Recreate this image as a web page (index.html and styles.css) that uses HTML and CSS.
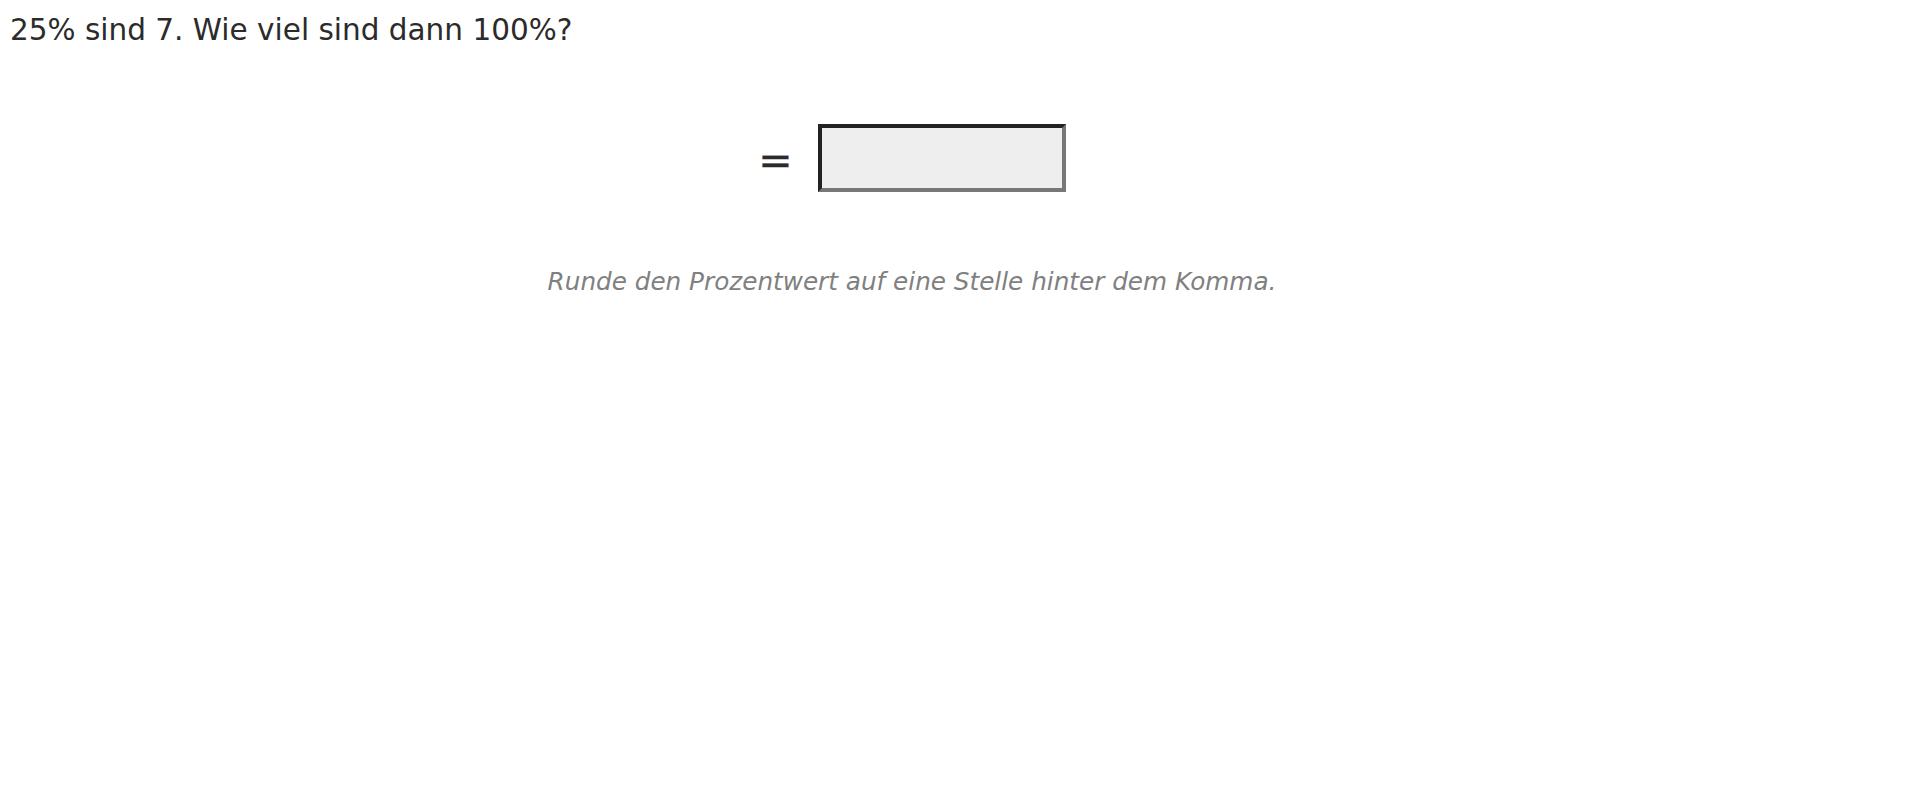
FILE: index.html
```html
<!DOCTYPE html>
<html lang="de">
<head>
<meta charset="utf-8">
<title>Prozentrechnung</title>
<link rel="stylesheet" href="styles.css">
</head>
<body>
<div class="page">
  <h1 class="question">25% sind 7. Wie viel sind dann 100%?</h1>
  <div class="exercise">
    <div class="answer-row">
      <span class="equals">=</span>
      <input class="answer" type="text" aria-label="Antwort">
    </div>
    <p class="hint">Runde den Prozentwert auf eine Stelle hinter dem Komma.</p>
  </div>
</div>
</body>
</html>
```
FILE: styles.css
```css
html, body {
  margin: 0;
  padding: 0;
  background: #ffffff;
}

body {
  font-family: "DejaVu Sans", Verdana, sans-serif;
  color: #2b2b2b;
}

.page {
  padding: 13px 0 0 10px;
}

.question {
  margin: 0;
  font-size: 29.5px;
  font-weight: normal;
  line-height: 34px;
}

.exercise {
  width: 1804px;
  display: flex;
  flex-direction: column;
  align-items: center;
}

.answer-row {
  margin-top: 77px;
  display: flex;
  align-items: center;
  gap: 25px;
}

.equals {
  font-size: 41px;
  line-height: 1;
  padding-top: 4px;
  -webkit-text-stroke: 0.4px #2b2b2b;
}

.answer {
  box-sizing: border-box;
  width: 248px;
  height: 68px;
  margin: 0;
  border-width: 4px;
  border-style: solid;
  border-color: #222222 #777777 #777777 #222222;
  background: #eeeeee;
  padding: 0 10px;
  font-family: "DejaVu Sans", sans-serif;
  font-size: 26px;
  outline: none;
}

.hint {
  margin: 76px 0 0;
  font-size: 24.7px;
  font-style: italic;
  color: #808080;
  line-height: 28px;
}
```
